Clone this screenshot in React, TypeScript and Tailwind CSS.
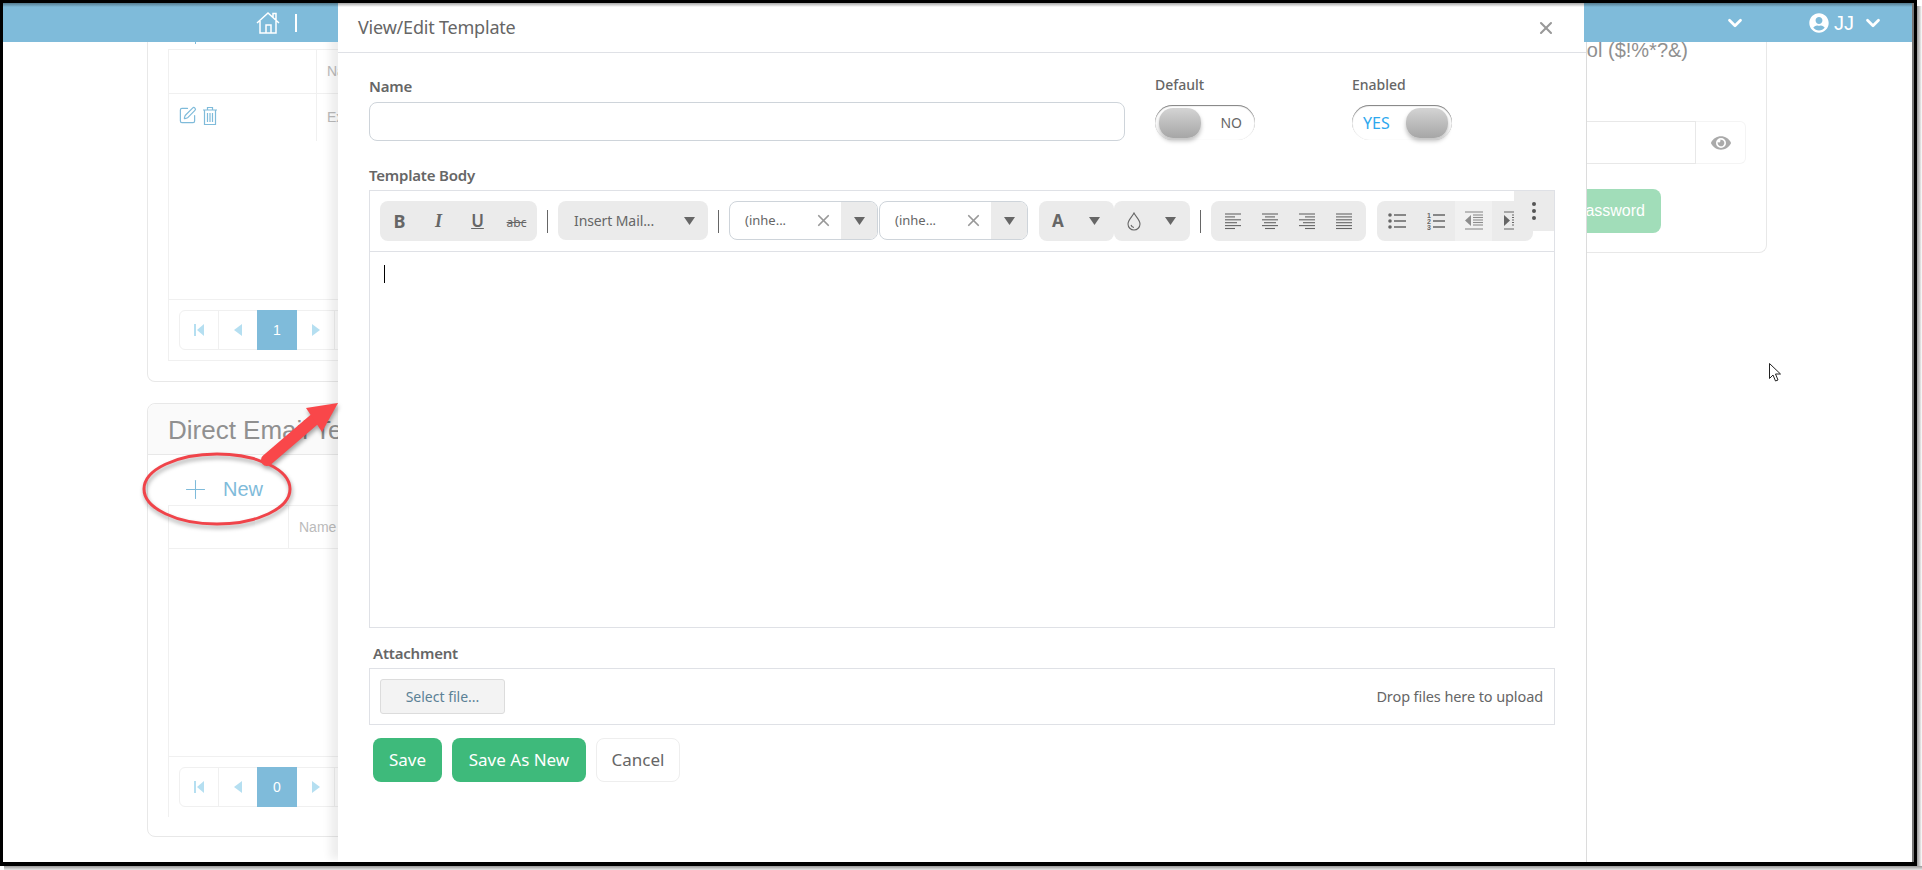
import { ChevronDown, Plus, SquarePen, X } from "lucide-react";
import { FaEye, FaUserCircle } from "react-icons/fa";

function Caret({ className = "" }: { className?: string }) {
  return (
    <svg width="11" height="8" viewBox="0 0 11 8" className={className}>
      <polygon points="0,0 11,0 5.5,8" fill="#666" />
    </svg>
  );
}

function Lines({ rows }: { rows: number[][] }) {
  return (
    <svg width="16" height="17" viewBox="0 0 16 17" stroke="#666" strokeWidth="1.1">
      {rows.map((r, i) => (
        <line key={i} x1={r[0]} x2={r[1]} y1={1 + i * 2.9} y2={1 + i * 2.9} />
      ))}
    </svg>
  );
}

function ListIcon({ numbered }: { numbered?: boolean }) {
  return (
    <svg width="18" height="18" viewBox="0 0 18 18">
      {[3, 9, 15].map((y, i) =>
        numbered ? (
          <text key={y} x="0" y={y + 2.5} fontSize="7" fontWeight="700" fill="#666" fontFamily="Liberation Sans, sans-serif">
            {i + 1}
          </text>
        ) : (
          <circle key={y} cx="2" cy={y} r="1.8" fill="#666" />
        ),
      )}
      {[3, 9, 15].map((y) => (
        <line key={y} x1="6" x2="18" y1={y} y2={y} stroke="#666" strokeWidth="1.4" />
      ))}
    </svg>
  );
}

function Indent({ out }: { out?: boolean }) {
  return (
    <svg width="18" height="20" viewBox="0 0 18 20" stroke="#666" strokeWidth="1.1">
      <line x1="0" x2="18" y1="1" y2="1" />
      {[4, 6.5, 9, 11.5, 14].map((y) => (
        <line key={y} x1="8" x2="18" y1={y} y2={y} />
      ))}
      <line x1="0" x2="18" y1="18" y2="18" />
      <polygon points={out ? "6,4 6,15 0,9.5" : "0,4 0,15 6,9.5"} fill="#666" stroke="none" />
    </svg>
  );
}

function Toggle({ on }: { on?: boolean }) {
  return (
    <div className="flex h-[35px] w-[100px] items-center justify-between rounded-full bg-white pl-[4px] pr-[4px] shadow-[inset_0_1px_1px_rgba(0,0,0,0.5),inset_0_0_1px_rgba(0,0,0,0.15)]">
      {on && <span className="pl-[7px] text-[16px] text-[#2ea8ee]">YES</span>}
      <span className="h-[30px] w-[42px] rounded-[14px] bg-linear-to-b from-[#d4d4d4] to-[#a6a6a6] shadow-[0_3px_4px_rgba(0,0,0,0.25)]" />
      {!on && <span className="pr-[9px] text-[14px] text-[#666]">NO</span>}
    </div>
  );
}

function Combo() {
  return (
    <div className="flex h-[39px] w-[149px] items-stretch overflow-hidden rounded-lg border border-[#ced4da] bg-white text-[13px] text-[#666]">
      <span className="flex flex-1 items-center justify-between pl-[15px] pr-[8px]">
        (inhe...
        <X size={19} strokeWidth={2.2} className="text-[#999]" />
      </span>
      <span className="flex w-[36px] items-center justify-center bg-[#ebebeb]">
        <Caret />
      </span>
    </div>
  );
}

function Sep() {
  return <div className="mx-[10px] mt-[9px] h-[23px] w-px bg-[#666]" />;
}

function Pager({ page }: { page: string }) {
  return (
    <div className="flex h-[40px] w-[200px] items-stretch rounded-md border border-[#f0f0f0]">
      <span className="flex w-[39px] items-center justify-center border-r border-[#f0f0f0]">
        <svg width="11" height="12" viewBox="0 0 11 12" fill="#b5dff1">
          <rect x="0" y="0" width="2" height="12" />
          <polygon points="10,0 10,12 3,6" />
        </svg>
      </span>
      <span className="flex w-[38px] items-center justify-center">
        <svg width="8" height="12" viewBox="0 0 8 12" fill="#b5dff1">
          <polygon points="8,0 8,12 0,6" />
        </svg>
      </span>
      <span className="-my-px flex w-[40px] items-center justify-center bg-[#7fbbda] text-[14px] text-white">{page}</span>
      <span className="flex w-[38px] items-center justify-center border-r border-[#f0f0f0]">
        <svg width="8" height="12" viewBox="0 0 8 12" fill="#b5dff1">
          <polygon points="0,0 0,12 8,6" />
        </svg>
      </span>
    </div>
  );
}

export default function App() {
  return (
    <div className="relative h-[870px] w-[1922px] overflow-hidden bg-white font-['Liberation_Sans',sans-serif]">
      {/* screenshot frame, everything else sits inside it */}
      <div className="h-[866px] w-[1917px] border-b-[4px] border-l-[3px] border-r-[4px] border-t-[3px] border-black bg-white">
        <div className="relative z-20 flex h-[39px]">
          <div className="flex w-[335px] items-center bg-[#7fbbda] pl-[253px]">
            <svg width="24" height="24" viewBox="0 0 24 24" fill="none" stroke="white" strokeWidth="1.5">
              <path d="M1 12 12 2l11 10M4 10v12h16V10M10 22v-8h5v8M17 6V2.500h3V9" />
            </svg>
            <div className="ml-[15px] h-[18px] w-[2px] bg-white" />
          </div>
          <div className="w-[1246px]" />
          <div className="flex flex-1 items-center bg-[#7fbbda] pl-[140px] text-white">
            <ChevronDown size={22} strokeWidth={3} />
            <FaUserCircle size={20} className="ml-[63px]" />
            <span className="ml-[5px] text-[20px]">JJ</span>
            <ChevronDown size={22} strokeWidth={3} className="ml-[8px]" />
          </div>
        </div>

        <div className="flex h-[820px] overflow-hidden pl-[144px] text-[#888]">
          <div className="w-[860px]">
            <div className="h-[340px] rounded-b-lg border-x border-b border-[#e8e8e8]">
              <div className="ml-[47px] h-[2px] w-px bg-[#7fbbda]" />
              <div className="ml-[20px] mt-[5px] flex h-[312px] w-[820px] flex-col border border-[#f0f0f0]">
                <div className="flex h-[44px] border-b border-[#f0f0f0]">
                  <div className="w-[148px] border-r border-[#f0f0f0]" />
                  <div className="flex items-center pl-[10px] text-[14px] text-[#bbb]">Name</div>
                </div>
                <div className="flex h-[47px]">
                  <div className="flex w-[148px] items-center gap-[5px] border-r border-[#f0f0f0] pb-[4px] pl-[9px] text-[#7fbbda]">
                    <SquarePen size={19} strokeWidth={1.5} />
                    <svg width="16" height="20" viewBox="0 0 16 20" fill="none" stroke="currentColor" strokeWidth="1.2">
                      <path d="M1 4h14M5.500 4V1.500h5V4M2.500 4v14.500h11V4M5.500 7v9M8 7v9M10.500 7v9" />
                    </svg>
                  </div>
                  <div className="flex items-center pl-[10px] text-[14px] text-[#bbb]">Example</div>
                </div>
                <div className="flex-1" />
                <div className="h-[61px] border-t border-[#f0f0f0] pl-[10px] pt-[10px]">
                  <Pager page="1" />
                </div>
              </div>
            </div>

            <div className="mt-[21px] h-[434px] rounded-lg border border-[#e8e8e8]">
              <div className="flex h-[51px] items-center rounded-t-lg border-b border-[#e8e8e8] bg-[#fafafa] pl-[20px] pt-[3px] text-[26px] text-[#909090]">
                Direct Email Templates
              </div>
              <div className="flex h-[50px] items-center pl-[32px] pt-[18px] text-[20px] text-[#7fbbda]">
                <Plus size={31} strokeWidth={0.8} />
                <span className="ml-[12px]">New</span>
              </div>
              <div className="ml-[20px] flex h-[312px] w-[820px] flex-col border-l border-t border-[#f0f0f0]">
                <div className="flex h-[43px] border-b border-[#f0f0f0]">
                  <div className="w-[120px] border-r border-[#f0f0f0]" />
                  <div className="flex items-center pl-[10px] text-[14px] text-[#bbb]">Name</div>
                </div>
                <div className="flex-1" />
                <div className="h-[61px] border-t border-[#f0f0f0] pl-[10px] pt-[10px]">
                  <Pager page="0" />
                </div>
              </div>
            </div>
          </div>

          <div className="ml-auto mr-[146px] flex h-[211px] w-[500px] flex-col items-end rounded-b-lg border-x border-b border-[#e8e8e8]">
            <div className="mr-[78px] flex h-[16px] items-center whitespace-nowrap text-[20px] text-[#909090]">
              Minimum one symbol ($!%*?&amp;)
            </div>
            <div className="mr-[20px] mt-[63px] flex h-[43px]">
              <div className="w-[300px] border border-[#e8e8e8]" />
              <div className="flex w-[50px] items-center justify-center rounded-r-md border-y border-r border-[#f4f4f4] text-[#aaa]">
                <FaEye size={20} />
              </div>
            </div>
            <div className="mr-[105px] mt-[25px] flex h-[44px] w-[200px] items-center justify-end rounded-lg bg-[#a1ddb9] pr-[16px] text-[16px] text-white">
              Change Password
            </div>
          </div>
        </div>
      </div>

      {/* modal dialog */}
      <div className="absolute left-[338px] top-[3px] z-10 h-[859px] w-[1249px] border-r border-[#dcdcdc] bg-white font-['Noto_Sans',sans-serif] text-[#666] shadow-[-11px_0_8px_-3px_rgba(0,0,0,0.07)]">
        <div className="flex h-[50px] items-center justify-between border-b border-[#dfe1e6] pl-[20px] pr-[30px]">
          <span className="text-[18px] tracking-[-0.2px]">View/Edit Template</span>
          <X size={20} strokeWidth={2.5} className="text-[#999]" />
        </div>

        <div className="pl-[31px] pr-[31px]">
          <div className="flex">
            <div className="w-[756px] pt-[23px]">
              <div className="h-[20px] text-[15px] font-semibold leading-[20px] tracking-[-0.2px]">Name</div>
              <div className="mt-[6px] h-[39px] rounded-lg border border-[#ced4da]" />
            </div>
            <div className="ml-[30px] w-[197px] pt-[22px]">
              <div className="h-[20px] text-[14px] font-medium leading-[20px]">Default</div>
              <div className="mt-[10px]">
                <Toggle />
              </div>
            </div>
            <div className="w-[100px] pt-[22px]">
              <div className="h-[20px] text-[14px] font-medium leading-[20px]">Enabled</div>
              <div className="mt-[10px]">
                <Toggle on />
              </div>
            </div>
          </div>

          <div className="mt-[24px] h-[20px] text-[15px] font-semibold leading-[20px] tracking-[-0.2px]">Template Body</div>
          <div className="relative mt-[5px] h-[438px] border border-[#dfe1e6]">
            <div className="flex h-[61px] items-start overflow-hidden border-b border-[#dfe1e6] pl-[10px] pt-[10px]">
              <div className="flex h-[40px] w-[157px] items-center rounded-lg bg-[#ebebeb] text-[#666]">
                <span className="w-[39px] text-center text-[18px] font-bold">B</span>
                <span className="w-[39px] text-center font-['Liberation_Serif',serif] text-[18px] font-bold italic">I</span>
                <span className="w-[39px] text-center text-[17px] font-semibold underline">U</span>
                <span className="w-[39px] pt-[3px] text-center text-[12px] line-through">abc</span>
              </div>
              <Sep />
              <div className="flex h-[39px] w-[150px] items-center justify-between rounded-lg bg-[#ebebeb] pl-[16px] pr-[13px] text-[14px] tracking-[-0.1px]">
                Insert Mail...
                <Caret />
              </div>
              <Sep />
              <Combo />
              <div className="ml-px">
                <Combo />
              </div>
              <div className="ml-[11px] flex h-[40px] w-[75px] items-center justify-between rounded-lg bg-[#ebebeb] pl-[13px] pr-[14px]">
                <span className="text-[17px] font-bold">A</span>
                <Caret />
              </div>
              <div className="flex h-[40px] w-[76px] items-center justify-between rounded-lg bg-[#ebebeb] pl-[13px] pr-[14px]">
                <svg width="14" height="19" viewBox="0 0 14 19" fill="none" stroke="#666" strokeWidth="1.1">
                  <path d="M7 1c2 4 6 7 6 11a6 6 0 0 1-12 0C1 8 5 5 7 1zM4 13c.5 1.500 1.500 2.500 3 2.500" />
                </svg>
                <Caret />
              </div>
              <Sep />
              <div className="flex h-[40px] w-[155px] items-center justify-around rounded-lg bg-[#ebebeb] px-[3px]">
                <Lines rows={[[0, 16], [0, 10], [0, 16], [0, 12], [0, 16], [0, 10]]} />
                <Lines rows={[[0, 16], [3, 13], [0, 16], [2, 14], [0, 16], [3, 13]]} />
                <Lines rows={[[0, 16], [6, 16], [0, 16], [4, 16], [0, 16], [6, 16]]} />
                <Lines rows={[[0, 16], [0, 16], [0, 16], [0, 16], [0, 16], [0, 16]]} />
              </div>
              <div className="ml-[11px] flex h-[40px] w-[156px] items-stretch overflow-hidden rounded-lg bg-[#ebebeb]">
                <span className="flex w-[39px] items-center justify-center">
                  <ListIcon />
                </span>
                <span className="flex w-[39px] items-center justify-center">
                  <ListIcon numbered />
                </span>
                <span className="flex w-[37px] items-center justify-center bg-[#f4f4f4] opacity-70">
                  <Indent out />
                </span>
                <span className="flex w-[37px] items-center justify-center pl-[4px]">
                  <Indent />
                </span>
              </div>
            </div>
            <div className="absolute right-0 top-0 flex h-[40px] w-[40px] flex-col items-center justify-center gap-[3px] bg-[#ebebeb]">
              <span className="h-[4px] w-[4px] rounded-full bg-[#555]" />
              <span className="h-[4px] w-[4px] rounded-full bg-[#555]" />
              <span className="h-[4px] w-[4px] rounded-full bg-[#555]" />
            </div>
            <div className="pl-[14px] pt-[13px]">
              <div className="h-[18px] w-px bg-black" />
            </div>
          </div>

          <div className="mt-[15px] h-[20px] pl-[4px] text-[15px] font-semibold leading-[20px] tracking-[-0.2px]">Attachment</div>
          <div className="mt-[5px] flex h-[57px] items-center justify-between border border-[#dfe1e6] pl-[10px] pr-[11px]">
            <div className="flex h-[35px] w-[125px] items-center justify-center rounded-[3px] border border-[#dcdcdc] bg-[#f3f3f3] text-[14px] text-[#5b8196]">
              Select file...
            </div>
            <span className="text-[14.500px] tracking-[-0.1px]">Drop files here to upload</span>
          </div>

          <div className="mt-[13px] flex gap-[10px] pl-[4px] text-[17px]">
            <div className="flex h-[44px] w-[69px] items-center justify-center rounded-lg bg-[#3eba7b] text-white">Save</div>
            <div className="flex h-[44px] w-[134px] items-center justify-center rounded-lg bg-[#3eba7b] text-white">Save As New</div>
            <div className="flex h-[44px] w-[84px] items-center justify-center rounded-lg border border-[#eeeeee]">Cancel</div>
          </div>
        </div>
      </div>

      {/* annotation drawn on top of the screenshot */}
      <svg width="360" height="160" viewBox="0 0 360 160" className="absolute left-0 top-[390px] z-30 drop-shadow-[1px_3px_2px_rgba(0,0,0,0.35)]" fill="none">
        <ellipse cx="217" cy="99" rx="73" ry="35" stroke="#f0444a" strokeWidth="3" />
        <line x1="267" y1="70" x2="316" y2="28" stroke="#f9474a" strokeWidth="12" strokeLinecap="round" />
        <polygon points="306,18 338,13 322,42" fill="#f9474a" />
      </svg>

      {/* mouse pointer */}
      <svg width="13" height="20" viewBox="0 0 13 20" className="absolute left-[1769px] top-[363px] z-30">
        <path d="M.5.500v15l3.500-3.500 2.500 6 2.500-1-2.500-6h5z" fill="white" stroke="#222" strokeWidth="1" />
      </svg>

      {/* soft shading the capture left along the frame */}
      <div className="absolute left-[3px] top-[3px] z-30 h-[4px] w-[1909px] bg-linear-to-b from-black/35 to-transparent" />
      <div className="absolute left-[1912px] top-[3px] z-30 h-[859px] w-[2px] bg-[#777]" />
      <div className="absolute left-[1917px] top-[6px] z-30 h-[864px] w-[5px] bg-linear-to-r from-[#999] to-white" />
      <div className="absolute left-[4px] top-[866px] z-30 h-[4px] w-[1918px] bg-linear-to-b from-[#999] to-[#e8e8e8]" />
    </div>
  );
}
